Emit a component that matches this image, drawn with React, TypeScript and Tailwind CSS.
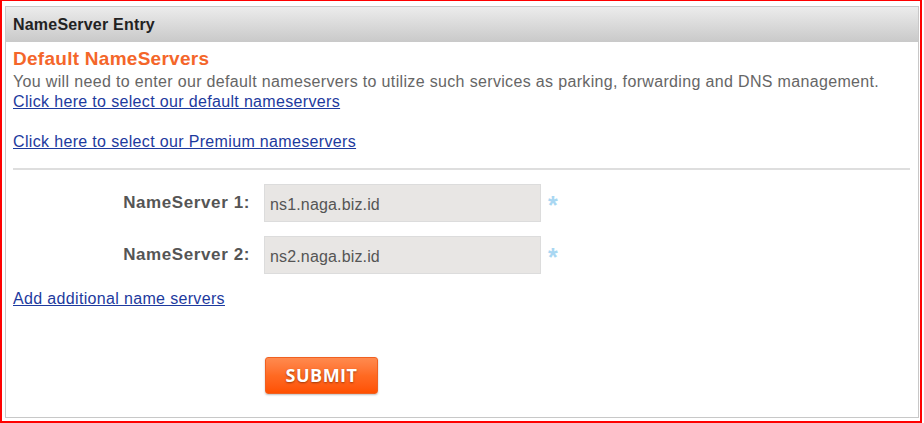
import React from "react";

export default function App() {
  return (
    <div className="w-[924px] h-[423px] bg-white" style={{ fontFamily: '"Liberation Sans", Arial, sans-serif' }}>
      <div className="w-[922px] h-[423px] border-l-2 border-t border-r-2 border-b-2 border-[#ff0000] pl-[3px] pt-[5px] pr-[1px] pb-[3px]">
        <div className="h-full border border-[#c8c8c8] flex flex-col">
          <div className="h-[35px] flex items-center pl-[7px] bg-gradient-to-b from-[#ececec] to-[#c9c9c9] text-[16px] font-bold tracking-[0.2px] text-[#222]">
            NameServer Entry
          </div>
          <div className="flex flex-col px-[7px] pt-[6px]">
            <div className="text-[19px] leading-[22px] font-bold tracking-[0.27px] text-[#f4662a]">Default NameServers</div>
            <div className="text-[16px] leading-[20px] tracking-[0.34px] text-[#666] mt-[2px]">
              You will need to enter our default nameservers to utilize such services as parking, forwarding and DNS management.
            </div>
            <a href="#" className="text-[16px] leading-[20px] tracking-[0.34px] text-[#1d3a9e] underline w-fit">
              Click here to select our default nameservers
            </a>
            <div className="h-[20px]" />
            <a href="#" className="text-[16px] leading-[20px] tracking-[0.34px] text-[#1d3a9e] underline w-fit">
              Click here to select our Premium nameservers
            </a>
            <div className="h-[2px] bg-[#dedede] mt-[16px] mr-[1px]" />
            <div className="flex flex-col gap-[14px] mt-[14px]">
              {[
                ["NameServer 1:", "ns1.naga.biz.id"],
                ["NameServer 2:", "ns2.naga.biz.id"],
              ].map(([label, val]) => (
                <div key={label} className="flex items-center">
                  <div className="w-[237px] text-right text-[17px] font-bold tracking-[0.6px] text-[#555]">{label}</div>
                  <div className="ml-[14px] w-[277px] h-[38px] bg-[#e8e6e4] border border-[#dcdcdc] flex items-center pl-[5px] pt-[4px] text-[16px] tracking-[0.15px] text-[#555]">
                    {val}
                  </div>
                  <span className="ml-[7px] text-[25px] leading-none font-bold text-[#a9d7f2] pt-[4px]">*</span>
                </div>
              ))}
            </div>
            <a href="#" className="text-[16px] leading-[20px] tracking-[0.34px] text-[#1d3a9e] underline w-fit mt-[15px]">
              Add additional name servers
            </a>
            <div className="mt-[48px] pl-[252px]">
              <button
                className="w-[113px] h-[37px] rounded-[3px] border border-[#f06020] bg-gradient-to-b from-[#ff8a4e] via-[#ff6a22] to-[#ff5000] text-white text-[18px] font-bold tracking-[0.5px] flex items-center justify-center shadow-[0_1px_2px_rgba(0,0,0,0.25)]"
                style={{ fontFamily: '"Open Sans", sans-serif', textShadow: "0 1px 2px rgba(120,40,0,0.7)" }}
              >
                SUBMIT
              </button>
            </div>
          </div>
        </div>
      </div>
    </div>
  );
}
